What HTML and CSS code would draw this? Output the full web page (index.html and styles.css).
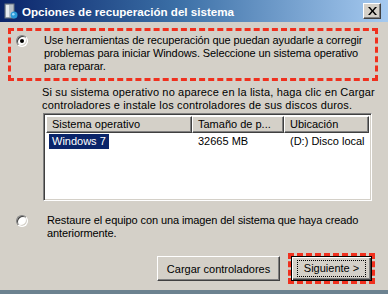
FILE: index.html
```html
<!DOCTYPE html>
<html>
<head>
<meta charset="utf-8">
<link rel="stylesheet" href="styles.css">
</head>
<body>
<div class="window">
  <div class="titlebar">
    <svg class="ticon" width="14" height="16" viewBox="0 0 14 16">
      <rect x="1" y="1" width="9" height="14" fill="#b8c0c8" stroke="#6a7480" stroke-width="1"/>
      <rect x="2" y="2" width="3" height="12" fill="#e8ecf0"/>
      <circle cx="10" cy="12" r="3.5" fill="#2a9ad8"/>
      <circle cx="9.3" cy="11.2" r="1.3" fill="#9adcff"/>
    </svg>
    <span class="ttext">Opciones de recuperación del sistema</span>
    <span class="close">
      <svg width="9" height="8" viewBox="0 0 9 8"><path d="M0 0h2l2.5 3 2.5-3h2l-3.5 4 3.5 4h-2l-2.5-3-2.5 3h-2l3.5-4z" fill="#000"/></svg>
    </span>
  </div>
  <div class="content">
    <div class="hl hl-top">
      <div class="option">
        <span class="radio checked"></span>
        <p class="otext">Use herramientas de recuperación que puedan ayudarle a corregir problemas para iniciar Windows. Seleccione un sistema operativo para reparar.</p>
      </div>
    </div>
    <p class="info">Si su sistema operativo no aparece en la lista, haga clic en Cargar controladores e instale los controladores de sus discos duros.</p>
    <div class="list">
      <div class="lhead">
        <div class="hc c1">Sistema operativo</div>
        <div class="hc c2">Tamaño de p...</div>
        <div class="hc c3">Ubicación</div>
      </div>
      <div class="lrow">
        <div class="rc c1"><span class="sel">Windows 7</span></div>
        <div class="rc c2">32665 MB</div>
        <div class="rc c3">(D:) Disco local</div>
      </div>
    </div>
    <div class="option opt2">
      <span class="radio"></span>
      <p class="otext">Restaure el equipo con una imagen del sistema que haya creado anteriormente.</p>
    </div>
    <div class="buttons">
      <button class="btn b-load">Cargar controladores</button>
      <div class="hl hl-btn"><button class="btn b-next"><span class="focus">Siguiente &gt;</span></button></div>
    </div>
  </div>
  <div class="bottomedge"></div>
</div>
</body>
</html>
```
FILE: styles.css
```css
* { box-sizing: border-box; }
html, body { margin: 0; padding: 0; }
body {
  width: 388px; height: 294px; overflow: hidden;
  font-family: "Liberation Sans", Arial, sans-serif;
  font-size: 11px; color: #000;
}
.window {
  width: 388px; height: 294px;
  background: #d4d0c8;
  display: flex; flex-direction: column;
}
.titlebar {
  height: 22px; flex: none;
  background: linear-gradient(to right, #0a246a 0%, #3a6ea5 45%, #a6caf0 100%);
  display: flex; align-items: center;
  padding: 0 7px 0 4px;
}
.ticon { flex: none; margin-right: 4px; }
.ttext {
  color: #fff; font-weight: bold; font-size: 11.6px;
  font-family: "Liberation Sans", Arial, sans-serif;
  flex: 1; white-space: nowrap;
}
.close {
  width: 18px; height: 16px; flex: none;
  background: #d4d0c8;
  border-top: 1px solid #fff; border-left: 1px solid #fff;
  border-right: 1px solid #404040; border-bottom: 1px solid #404040;
  box-shadow: inset -1px -1px 0 #808080;
  display: flex; align-items: center; justify-content: center;
}
.content {
  flex: 1;
  padding: 6px 10px 0 8px;
  display: flex; flex-direction: column;
  font-size: 11px;
}
.hl { border: 3px dashed #f0301e; }
.hl-top { height: 53px; padding: 3px 0 0 5px; }
.option { display: flex; align-items: flex-start; }
.radio {
  width: 12px; height: 12px; flex: none; border-radius: 50%;
  background: #fff;
  border: 1px solid; border-color: #808080 #fff #fff #808080;
  box-shadow: inset 1px 1px 0 #404040, inset -1px -1px 0 #d4d0c8;
  margin-top: 1px;
  position: relative;
}
.radio.checked::after {
  content: ""; position: absolute; left: 3px; top: 3px;
  width: 4px; height: 4px; border-radius: 50%; background: #000;
}
.otext { margin: 0 0 0 16px; line-height: 13px; letter-spacing: -0.1px; }
.info { margin: 5px 0 0 34px; line-height: 13px; letter-spacing: 0.15px; }
.list {
  margin: 1px 6px 0 35px; height: 88px;
  background: #fff;
  border: 1px solid; border-color: #808080 #fff #fff #808080;
  box-shadow: inset 1px 1px 0 #404040, inset -1px -1px 0 #d4d0c8;
  padding: 2px 2px;
}
.lhead { display: flex; height: 17px; }
.hc {
  background: #d4d0c8; height: 17px; line-height: 14px;
  border-top: 1px solid #fff; border-left: 1px solid #fff;
  border-right: 1px solid #404040; border-bottom: 1px solid #404040;
  box-shadow: inset -1px -1px 0 #808080;
  padding-left: 5px; white-space: nowrap; overflow: hidden;
}
.c1 { width: 146px; flex: none; }
.c2 { width: 92px; flex: none; }
.c3 { flex: 1; }
.lrow { display: flex; height: 16px; margin-top: 1px; }
.rc { padding-left: 6px; line-height: 15px; white-space: nowrap; }
.rc.c1 { padding-left: 3px; }
.sel { background: #0a246a; color: #fff; display: inline-block; padding: 0 3px; height: 15px; }
.opt2 { margin: 13px 0 0 8px; }
.opt2 .otext { margin-left: 19px; }
.buttons {
  display: flex; justify-content: flex-end; align-items: center;
  margin-top: 13px; padding-right: 3px;
}
.btn {
  font-family: "Liberation Sans", Arial, sans-serif; font-size: 11px;
  background: #d4d0c8; color: #000; height: 25px; padding: 0;
  border-top: 1px solid #fff; border-left: 1px solid #fff;
  border-right: 1px solid #404040; border-bottom: 1px solid #404040;
  box-shadow: inset -1px -1px 0 #808080;
}
.b-load { width: 123px; margin-right: 8px; }
.hl-btn { padding: 0; }
.b-next {
  width: 81px; border: 1px solid #000;
  box-shadow: inset 1px 1px 0 #fff, inset -1px -1px 0 #404040, inset -2px -2px 0 #808080;
  display: flex; align-items: center; justify-content: center;
}
.focus { border: 1px dotted #000; padding: 1px 6px; line-height: 13px; }
.bottomedge { height: 4px; flex: none; background: #6c8290; }
```
